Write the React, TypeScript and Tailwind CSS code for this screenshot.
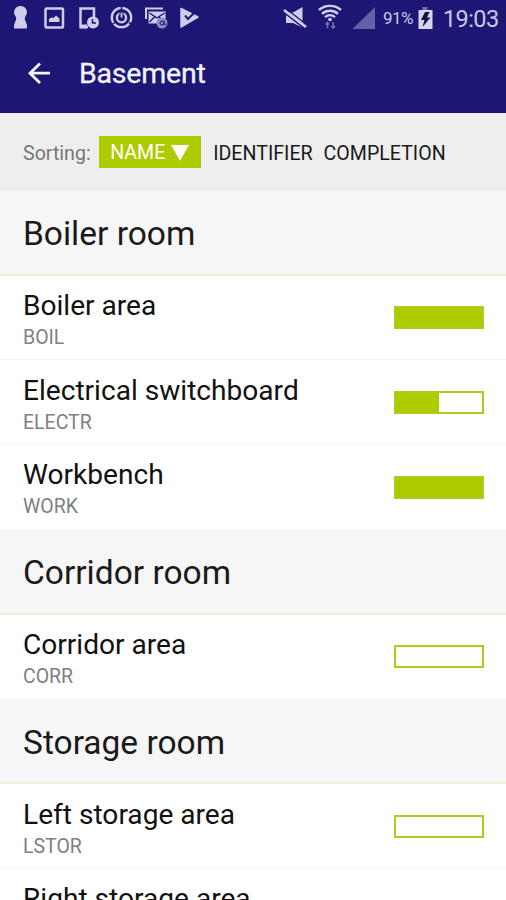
type SortKey = 'NAME' | 'IDENTIFIER' | 'COMPLETION';

interface Area {
  name: string;
  code: string;
  /** Share of the work that is done, 0 to 100 */
  completion: number;
}

interface Room {
  name: string;
  areas: Area[];
}

const rooms: Room[] = [
  {
    name: 'Boiler room',
    areas: [
      { name: 'Boiler area', code: 'BOIL', completion: 100 },
      { name: 'Electrical switchboard', code: 'ELECTR', completion: 50 },
      { name: 'Workbench', code: 'WORK', completion: 100 },
    ],
  },
  {
    name: 'Corridor room',
    areas: [{ name: 'Corridor area', code: 'CORR', completion: 0 }],
  },
  {
    name: 'Storage room',
    areas: [
      { name: 'Left storage area', code: 'LSTOR', completion: 0 },
      { name: 'Right storage area', code: 'RSTOR', completion: 0 },
    ],
  },
];

const sortKeys: SortKey[] = ['NAME', 'IDENTIFIER', 'COMPLETION'];

function NotificationIcons() {
  return (
    <svg width="200" height="36" viewBox="0 0 200 36" fill="none" className="text-[#cfcdea]" aria-hidden="true">
      {/* keyhole */}
      <path d="M20.500 6a6.300 6.300 0 0 1 5.300 9.800l-1 2c-.2 1 .1 1.800.5 2.700l1.700 4.500v3.500H14V25l1.700-4.500c.4-.9.7-1.700.5-2.700l-1-2A6.300 6.300 0 0 1 20.500 6z" fill="currentColor" />
      {/* picture */}
      <rect x="45.500" y="8.500" width="17.500" height="19" rx="1" stroke="currentColor" strokeWidth="2.500" />
      <path d="M49 22v-3l2.500-1.500 2 .5 2.500-2.500 3.500 3V22z" fill="currentColor" />
      {/* device with clock */}
      <path d="M88 27h-7.500v-18.500h13.500V17" stroke="currentColor" strokeWidth="2.500" />
      <path d="M80 24.500h7v4h-7z" fill="currentColor" />
      <circle cx="93" cy="22.500" r="6" fill="currentColor" />
      <path d="M92.500 19v4h3.500" stroke="#1c1775" strokeWidth="1.500" />
      {/* power ring */}
      <circle cx="121.500" cy="17.500" r="9.700" stroke="currentColor" strokeWidth="2.300" />
      <path d="M121.500 6v4M129 22.500l3.500 2M112.500 24l3-2" stroke="#1c1775" strokeWidth="1.500" />
      <circle cx="121.500" cy="17.800" r="4.600" stroke="currentColor" strokeWidth="2.300" />
      <path d="M121.500 12v7" stroke="#1c1775" strokeWidth="4" />
      <path d="M121.500 12.500v5" stroke="currentColor" strokeWidth="1.800" />
      {/* mail stack */}
      <path d="M146 19V8.500h17" stroke="currentColor" strokeWidth="2" />
      <path d="M148.500 11.500h17v12h-17z" fill="currentColor" />
      <path d="M149.500 13l7.500 5 7.500-5M149.500 22l5-5M164 22l-5-5" stroke="#1c1775" strokeWidth="1.400" />
      <circle cx="162" cy="23" r="5.500" fill="#8f8bc4" />
      <circle cx="162" cy="23" r="2" stroke="#1c1775" />
      <path d="M164 20.500v3.500c0 1.500 2 1.500 2-.5" stroke="#1c1775" />
      {/* play with check */}
      <path d="M181 8.500l17 8.500-17 10z" fill="currentColor" stroke="currentColor" strokeWidth="1.500" strokeLinejoin="round" />
      <path d="M185 15.500l3 3.500 7.500-7.500" stroke="#1c1775" strokeWidth="2" />
    </svg>
  );
}

function SystemIcons() {
  return (
    <svg width="98" height="36" viewBox="280 0 98 36" fill="none" className="text-[#cfcdea]" aria-hidden="true">
      {/* muted speaker */}
      <path d="M286 12.500h7l9.500-5.500v20.500l-9.500-4.500h-7z" fill="currentColor" />
      <path d="M283.500 12l22 17" stroke="#1c1775" strokeWidth="1.600" />
      <path d="M284 10l22 17" stroke="currentColor" strokeWidth="2.800" />
      <path d="M285 8l21.500 16.500" stroke="#1c1775" strokeWidth="1.200" />
      {/* wifi with traffic arrows */}
      <path d="M319 10c6-5.500 16-5.500 22 0M322 13.800c4.500-4 11.500-4 16 0M325 17.200c3-2.600 7-2.600 10 0" stroke="currentColor" strokeWidth="2.400" />
      <circle cx="330" cy="19.500" r="1.800" fill="currentColor" />
      <path d="M327.500 28.500v-6M325.500 24.500l2-2 1.500 2M333 22v6M331.500 26l1.500 2 2-2" stroke="#716caf" strokeWidth="1.600" />
      {/* signal */}
      <path d="M375 7v22h-22.500z" fill="#6661a6" />
    </svg>
  );
}

function BatteryIcon() {
  return (
    <svg width="15" height="24" viewBox="0 0 15 24" className="ml-1" aria-hidden="true">
      <path d="M4.500 1h5v3h-5z" fill="#716caf" />
      <path d="M.5 4h14v19H.5z" fill="#d6d4ec" />
      <path d="M7 6h4.500L9 11.500h3.500L4.500 21l2-7H3z" fill="#120e48" />
    </svg>
  );
}

function StatusBar() {
  return (
    <div className="flex h-9 items-center text-[#c9c7e8]">
      <NotificationIcons />
      <div className="w-20" />
      <SystemIcons />
      <span className="ml-[5px] w-[31px] pt-[2px] whitespace-nowrap text-[17px] tracking-[-0.5px]">91%</span>
      <BatteryIcon />
      <span className="ml-[10px] pt-[3px] whitespace-nowrap text-[23.5px] tracking-[-0.6px]">19:03</span>
    </div>
  );
}

function CompletionBar({ value }: { value: number }) {
  return (
    <div className="h-[23px] w-[90px] shrink-0 border-2 border-[#aecb1f] bg-white">
      <div className="h-full bg-[#aecb00]" style={{ width: `${value}%` }} />
    </div>
  );
}

function AreaRow({ area }: { area: Area }) {
  return (
    <li className="flex h-[84.83px] items-center justify-between border-b border-[#f3f3f3] bg-white pr-[22px] pl-[23px]">
      <div className="pt-[6px]">
        <div className="text-[28.100px] leading-[34px] text-[#111]">{area.name}</div>
        <div className="text-[19.500px] leading-[29.500px] text-[#808080]">{area.code}</div>
      </div>
      <CompletionBar value={area.completion} />
    </li>
  );
}

export default function App() {
  const activeSort: SortKey = 'NAME';

  return (
    <div className="h-[900px] w-[506px] overflow-hidden bg-white font-['Roboto',sans-serif]">
      <header className="h-[113px] bg-[#1c1775]">
        <StatusBar />
        <div className="flex h-[74px] items-center pl-[27px] text-[#f4f4ff]">
          <svg width="24" height="24" viewBox="0 0 24 24" fill="none" stroke="currentColor" strokeWidth="2.800" aria-label="Back">
            <path d="M13 2.500L3 12.200l10 9.700M2.500 12.200H23" />
          </svg>
          <h1 className="ml-[28px] pt-[2px] text-[28.500px] font-normal tracking-[-0.200px] [-webkit-text-stroke:0.3px]">Basement</h1>
        </div>
      </header>

      <div className="flex h-[77.700px] items-center bg-[#eee] pl-[23px] text-[19.600px] text-[#1a1a1a]">
        <span className="mr-[8.500px] pt-[3px] text-[#777]">Sorting:</span>
        {sortKeys.map((key) =>
          key === activeSort ? (
            <button key={key} type="button" className="mr-3 flex h-8 w-[102px] items-center bg-[#aecb00] pt-[2px] pl-[11px] text-white">
              {key}
              <svg width="18" height="16" viewBox="0 0 18 16" className="ml-[6px]" aria-hidden="true">
                <path d="M0 0h18L9 16z" fill="currentColor" />
              </svg>
            </button>
          ) : (
            <button key={key} type="button" className="mr-[11px] pt-[3px]">
              {key}
            </button>
          ),
        )}
      </div>

      {rooms.map((room) => (
        <section key={room.name}>
          <h2 className="flex h-[84.83px] items-center border-b-2 border-[#eeeedb] bg-[#f6f6f6] pt-[3.500px] pl-[23px] text-[33.500px] text-[#1a1a1a]">
            {room.name}
          </h2>
          <ul>
            {room.areas.map((area) => (
              <AreaRow key={area.code} area={area} />
            ))}
          </ul>
        </section>
      ))}
    </div>
  );
}
